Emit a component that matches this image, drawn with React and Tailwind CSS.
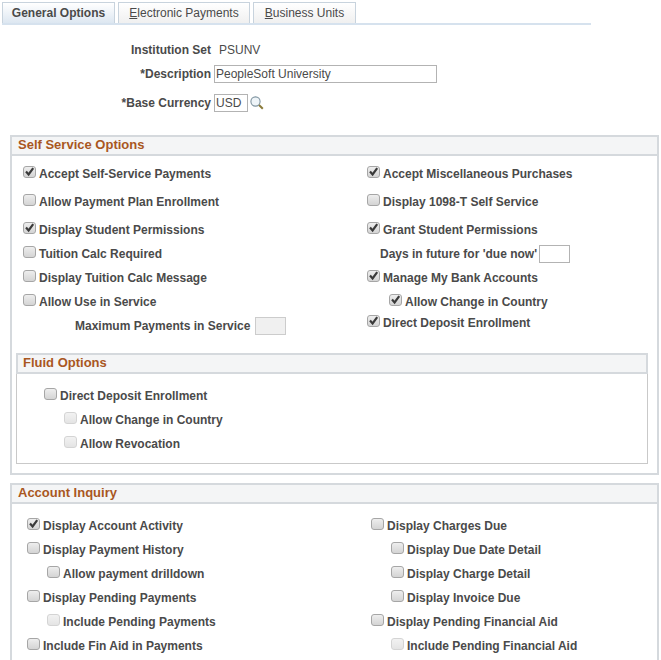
function Box({ checked, disabled }) {
  return (
    <span
      className={`relative inline-block h-[12px] w-[13px] shrink-0 rounded-[3px] border bg-linear-to-b ${
        disabled
          ? "border-[#d4d4d4] from-[#f2f2f2] to-[#e4e4e4]"
          : "border-[#a6a6a6] from-[#eeeeee] to-[#d4d4d4]"
      }`}
    >
      {checked && (
        <svg viewBox="0 0 13 12" className="absolute -left-px -top-px h-[12px] w-[13px]">
          <path d="M3 5.5 L5.6 8.4 L10.2 2.2" fill="none" stroke="#3a3a3a" strokeWidth="2.2" />
        </svg>
      )}
    </span>
  );
}

function Check({ label, checked, disabled, indent = 0, h = "h-6", className = "" }) {
  return (
    <div className={`flex items-center ${h} ${className}`} style={{ paddingLeft: indent }}>
      <span className="-mt-[4px] flex">
        <Box checked={checked} disabled={disabled} />
      </span>
      <span className="ml-[3px] whitespace-nowrap">{label}</span>
    </div>
  );
}

function Header({ title, pad = "pl-1.5" }) {
  return (
    <div className={`flex h-[21px] items-center border-2 border-[#d5d9dd] bg-[#f4f5f6] pb-0.5 text-[13px] font-bold text-[#a9571f] ${pad}`}>
      {title}
    </div>
  );
}

function Tab({ active, children }) {
  return (
    <div
      className={`flex h-[21px] items-center justify-center border-x border-t border-[#c8d3dd] bg-linear-to-b ${
        active
          ? "w-[113px] from-white to-[#dde7f1] font-bold"
          : "w-[132px] from-white to-[#f0f0f0] font-normal"
      }`}
    >
      {children}
    </div>
  );
}

export default function App() {
  return (
    <div className="h-[660px] w-[661px] overflow-hidden bg-white pt-0.5 font-['Liberation_Sans',Arial,sans-serif] text-[12px] font-bold text-[#4a4a4a]">
      {/* tabs */}
      <div className="ml-0.5 flex w-[589px] gap-[3px] border-b-2 border-[#d6e2ee]">
        <Tab active>General Options</Tab>
        <Tab>
          <span><u>E</u>lectronic Payments</span>
        </Tab>
        <div className="flex h-[21px] w-[103px] items-center justify-center border-x border-t border-[#c8d3dd] bg-linear-to-b from-white to-[#f0f0f0] font-normal">
          <span><u>B</u>usiness Units</span>
        </div>
      </div>

      {/* top form */}
      <div className="mt-[13px] flex h-[24px] items-center">
        <div className="w-[211px] text-right">Institution Set</div>
        <div className="ml-2 font-normal">PSUNV</div>
      </div>
      <div className="flex h-[24px] items-center">
        <div className="w-[211px] text-right">*Description</div>
        <div className="ml-[3px] flex h-[18px] w-[223px] items-center border border-[#b3b3b3] pl-px font-normal">
          PeopleSoft University
        </div>
      </div>
      <div className="mt-[5px] flex h-[24px] items-center">
        <div className="w-[211px] text-right">*Base Currency</div>
        <div className="ml-[3px] flex h-[18px] w-[34px] items-center border border-[#b3b3b3] pl-px font-normal">
          USD
        </div>
        <svg viewBox="0 0 14 14" className="ml-0.5 h-[14px] w-[14px]">
          <circle cx="5.5" cy="5.5" r="4.6" fill="#eef4f8" stroke="#7d929f" strokeWidth="1.1" />
          <path d="M9 9 L12.8 12.8" stroke="#8a7a3a" strokeWidth="2" />
        </svg>
      </div>

      {/* self service */}
      <div className="ml-2.5 mt-[20px] h-[340px] w-[649px] border-x-2 border-b-2 border-[#d5d9dd]">
        <div className="-mx-0.5">
          <Header title="Self Service Options" />
        </div>
        <div className="flex pt-1.5">
          <div className="ml-[11px] w-[344px]">
            <Check checked className="mb-1" label="Accept Self-Service Payments" />
            <Check className="mb-1" label="Allow Payment Plan Enrollment" />
            <Check checked label="Display Student Permissions" />
            <Check label="Tuition Calc Required" />
            <Check label="Display Tuition Calc Message" />
            <Check label="Allow Use in Service" />
            <div className="flex h-6 items-center">
              <span className="ml-[52px]">Maximum Payments in Service</span>
              <span className="ml-[5px] h-[18px] w-[31px] border border-[#cccccc] bg-[#f0f0f0]" />
            </div>
          </div>
          <div>
            <Check checked className="mb-1" label="Accept Miscellaneous Purchases" />
            <Check className="mb-1" label="Display 1098-T Self Service" />
            <Check checked label="Grant Student Permissions" />
            <div className="flex h-6 items-center pl-[13px]">
              <span>Days in future for 'due now'</span>
              <span className="ml-0.5 h-[18px] w-[31px] border border-[#b3b3b3]" />
            </div>
            <Check checked label="Manage My Bank Accounts" />
            <Check checked indent={22} label="Allow Change in Country" />
            <Check checked h="h-[18px]" label="Direct Deposit Enrollment" />
          </div>
        </div>

        {/* fluid */}
        <div className="ml-[4px] mt-[15px] h-[111px] w-[632px] border-x border-b border-[#c9c9c9]">
          <div className="-mx-px">
            <Header title="Fluid Options" pad="pl-[5px]" />
          </div>
          <div className="pt-2.5">
            <Check indent={27} label="Direct Deposit Enrollment" />
            <Check disabled indent={47} label="Allow Change in Country" />
            <Check disabled indent={47} label="Allow Revocation" />
          </div>
        </div>
      </div>

      {/* account inquiry */}
      <div className="ml-2.5 mt-[8px] h-[180px] w-[649px] border-x-2 border-[#d5d9dd]">
        <div className="-mx-0.5">
          <Header title="Account Inquiry" />
        </div>
        <div className="flex pt-2.5">
          <div className="ml-[15px] w-[344px]">
            <Check checked label="Display Account Activity" />
            <Check label="Display Payment History" />
            <Check indent={20} label="Allow payment drilldown" />
            <Check label="Display Pending Payments" />
            <Check disabled indent={20} label="Include Pending Payments" />
            <Check label="Include Fin Aid in Payments" />
          </div>
          <div>
            <Check label="Display Charges Due" />
            <Check indent={20} label="Display Due Date Detail" />
            <Check indent={20} label="Display Charge Detail" />
            <Check indent={20} label="Display Invoice Due" />
            <Check label="Display Pending Financial Aid" />
            <Check disabled indent={20} label="Include Pending Financial Aid" />
          </div>
        </div>
      </div>
    </div>
  );
}
